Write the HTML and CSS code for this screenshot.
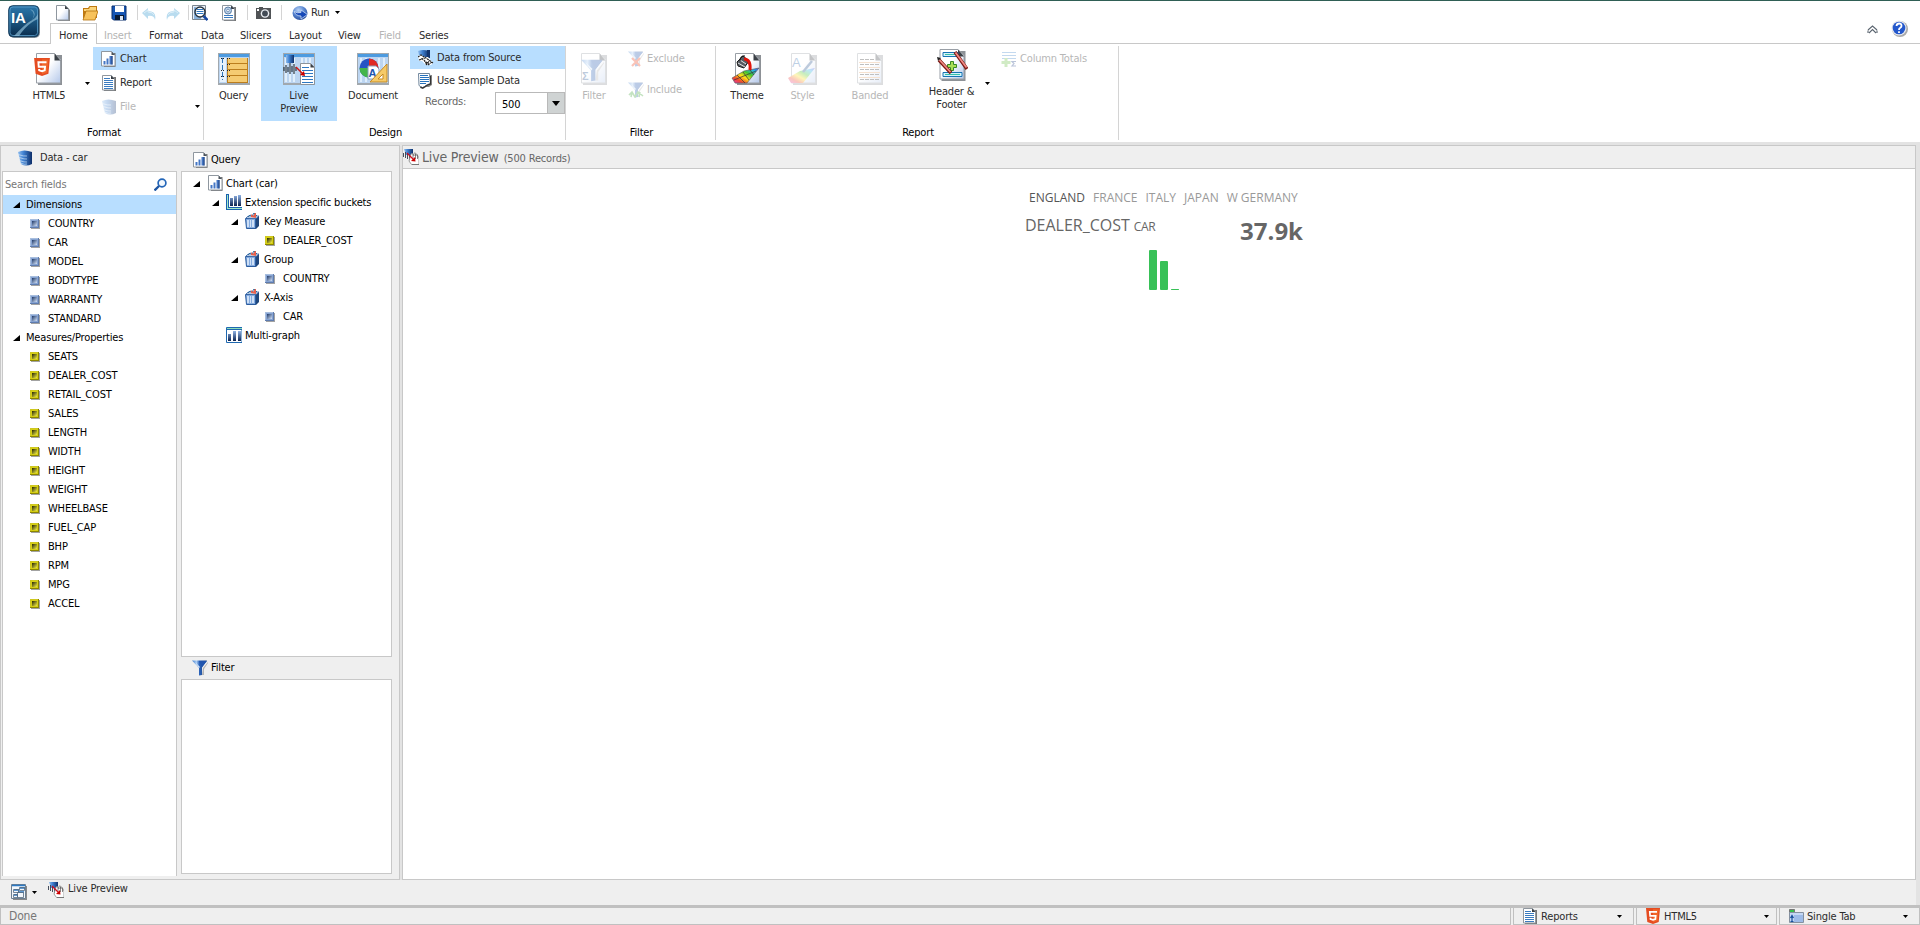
FILE: index.html
```html
<!DOCTYPE html>
<html lang="en">
<head>
<meta charset="utf-8">
<title>InfoAssist</title>
<link rel="stylesheet" href="styles.css">
</head>
<body>
<svg class="defs" width="0" height="0" aria-hidden="true">
  <defs>
    <linearGradient id="gPage" x1="0" y1="0" x2="1" y2="1"><stop offset=".45" stop-color="#fff"/><stop offset="1" stop-color="#b4c8ea"/></linearGradient>
    <linearGradient id="gLogo" x1="0" y1="0" x2="0" y2="1"><stop offset="0" stop-color="#2c78ac"/><stop offset=".5" stop-color="#1a5580"/><stop offset="1" stop-color="#0a2c4c"/></linearGradient>
    <linearGradient id="gBar" x1="0" y1="0" x2="0" y2="1"><stop offset="0" stop-color="#8fb2e4"/><stop offset="1" stop-color="#0c2350"/></linearGradient>
    <linearGradient id="gDb" x1="0" y1="0" x2="1" y2="0"><stop offset="0" stop-color="#8fbdee"/><stop offset=".4" stop-color="#3f80d0"/><stop offset="1" stop-color="#0e2f6a"/></linearGradient>
    <linearGradient id="gFunnel" x1="0" y1="0" x2="1" y2="0"><stop offset="0" stop-color="#3f7fd0"/><stop offset=".3" stop-color="#a9cbf2"/><stop offset=".5" stop-color="#2a62b8"/><stop offset="1" stop-color="#1b3f7c"/></linearGradient>
    <linearGradient id="gBlue" x1="0" y1="0" x2="1" y2="1"><stop offset="0" stop-color="#1c3766"/><stop offset="1" stop-color="#d5e3f8"/></linearGradient>
    <linearGradient id="gGold" x1="0" y1="0" x2="1" y2="1"><stop offset="0" stop-color="#222200"/><stop offset="1" stop-color="#f5f04a"/></linearGradient>
    <radialGradient id="gBall" cx=".4" cy=".3" r=".8"><stop offset="0" stop-color="#b9d3f6"/><stop offset=".5" stop-color="#5684cf"/><stop offset="1" stop-color="#1c3f8f"/></radialGradient>
    <linearGradient id="gRain" x1="0" y1="1" x2="1" y2="0"><stop offset="0" stop-color="#e33ac0"/><stop offset=".22" stop-color="#f04a2a"/><stop offset=".42" stop-color="#ffe21a"/><stop offset=".62" stop-color="#43c62c"/><stop offset=".82" stop-color="#25b4ee"/><stop offset="1" stop-color="#4a3ad8"/></linearGradient>
  </defs>

  <symbol id="page" viewBox="0 0 16 16"><path d="M3 2h9l3 3v11H3z" fill="#888"/><path d="M1.500.5h9l3 3.500v11H1.500z" fill="url(#gPage)" stroke="#8f979f"/><path d="M10 .5V4h3.500z" fill="#3c4248"/></symbol>
  <symbol id="chartpage" viewBox="0 0 16 16"><path d="M3 2h11.500v14H3z" fill="#777"/><path d="M.5.5h10l3.500 3.500v11H.5z" fill="#fff" stroke="#8f979f"/><path d="M10.500.5V4H14z" fill="#4c545c"/><path d="M2.500 10h2v3.500h-2zM5.500 7.500h2v6h-2zM8.500 5h3v8.500h-3z" fill="#4476c4"/><path d="M10.500 5h1v8.500h-1z" fill="#1c3f7c"/></symbol>
  <symbol id="textpage" viewBox="0 0 16 16"><path d="M3 2h12v14H3z" fill="#777"/><path d="M1.500.5h9l3 3.500v11h-12z" fill="#fff" stroke="#8f979f"/><path d="M10 .5V4h3.500z" fill="#333a42"/><path d="M3 3.500h6M3 5.500h9M3 7.500h9M3 9.500h9M3 11.500h9M3 13.500h9" stroke="#3a7bc0"/></symbol>
  <symbol id="db" viewBox="0 0 16 16"><path d="M1 2q6-3 14 0v12q-6 3-11 0z" fill="url(#gDb)"/><path d="M1 4.500q6 2 9 1.500M2 7.500q6 2 8 1.500M2 10.500q6 2 8 1.500M3 13q5 2 7 1" fill="none" stroke="#d9ebfa" stroke-width=".8" opacity=".8"/></symbol>
  <symbol id="funnel" viewBox="0 0 16 16"><path d="M11 8l5-6v1l-4 6v6h-2z" fill="#b5b5b5"/><path d="M0 .5h15L10 7.500V15l-3 .5V8z" fill="url(#gFunnel)"/><path d="M3 2l5 5-1 1z" fill="#d9e9fb"/><path d="M7 1h8l-5 6z" fill="#2155ae"/></symbol>
  <symbol id="measure" viewBox="0 0 10 10"><path d="M1 1h9v9H1z" fill="#a2a2a2"/><path d="M0 0h9v9H0z" fill="#8c8600"/><path d="M0 0h8v1H1v7H0z" fill="#cfc820"/><path d="M1 1h7v7H1z" fill="#d6cf14"/><path d="M2 2h5v5H2z" fill="url(#gGold)"/></symbol>
  <symbol id="dim" viewBox="0 0 10 10"><path d="M1 1h9v9H1z" fill="#a2a2a2"/><path d="M0 0h9v9H0z" fill="#5f7cae"/><path d="M0 0h8v1H1v7H0z" fill="#a8bede"/><path d="M1 1h7v7H1z" fill="#86a3d2"/><path d="M2 2h5v5H2z" fill="url(#gBlue)"/></symbol>
  <symbol id="tri" viewBox="0 0 7 6"><path d="M7 0v6H0z" fill="#000"/></symbol>
  <symbol id="down" viewBox="0 0 5 3"><path d="M0 0h5L2.500 3z" fill="#000"/></symbol>
  <symbol id="buckets" viewBox="0 0 16 16"><path d="M0 0h3v13h13v3H0z" fill="#1a62ae"/><path d="M1 1h1v13h14v1H1z" fill="#a5e8c6"/><path d="M4 4h3v8H4zM8 2h3v10H8zM12 1h3v11h-3z" fill="url(#gBar)"/></symbol>
  <symbol id="multi" viewBox="0 0 16 16"><path d="M.5.500H16v15H.5z" fill="#fff" stroke="#1f68b0"/><path d="M1 1h15v1H1z" fill="#8edfb9"/><path d="M0 2.500h16" stroke="#1f68b0"/><path d="M2 7h3v7H2zM7 4h3v10H7zM12 4h3v10h-3z" fill="url(#gBar)"/></symbol>
  <symbol id="bucket" viewBox="0 0 16 16"><path d="M2 5l2-2h10v10l-3 3H2z" fill="#1f467c"/><path d="M.5 5.500h10v10h-9z" fill="#86acdf" stroke="#2b5c9f"/><path d="M2 7h2v7H2zM5 7h1v7H5zM7 7h2v7H7z" fill="#cfe0f6"/><path d="M1 5l2-2h11l-3 2.500z" fill="#dfe9f5" stroke="#2b5c9f" stroke-width=".7"/><path d="M3 4l2-2 2 1 2-3 3 3" fill="none" stroke="#2b6a9f"/><path d="M6 4V1l2 2 2-3h1v5z" fill="#e8604c"/></symbol>
  <symbol id="html5" viewBox="0 0 16 16"><path d="M1 0h14l-1.300 14L8 16l-5.700-2z" fill="#e54c21"/><path d="M8 1.300h5.600l-1 11.500L8 14.500z" fill="#f1662a"/><path d="M12 3.800H4.800l.3 4h5.600l-.3 3.200-2.400.8-2.500-.8-.1-1.200" fill="none" stroke="#fff" stroke-width="1.700"/></symbol>
  <symbol id="live" viewBox="0 0 16 16"><path d="M1 0h9v6H3z" fill="url(#gDb)"/><path d="M.5 4v4M2.500 3v6M4.500 5v5M6.500 7v5" stroke="#333c4c" stroke-width=".9"/><path d="M8 5q1-1 2 0l1 2V4h1.500l.5 3V5l1.500.5.5 3 1-1v8H8.500L6 12z" fill="#fff" stroke="#888" stroke-width=".8"/><path d="M10 5v4M12.500 5v5M14.500 6v4" stroke="#555" stroke-width=".7"/><path d="M9 15.500h7" stroke="#777"/><path d="M4 4l7 7" stroke="#d01020" stroke-width="1.200"/><path d="M12.500 12.500l-4.500-.5 4-4z" fill="#c00"/></symbol>
  <symbol id="source" viewBox="0 0 16 16"><path d="M0 1q5-2 11 0v8L4 7 1 5z" fill="url(#gDb)"/><path d="M9 0h3v8H9z" fill="#12356f"/><path d="M0 6l3-1 4 2 3 0 5 6-2 2H8l-4-4H1z" fill="#fff"/><path d="M0 7l3-2 5 3 7 5M1 10l3-1 7 5M3 9l4-1M6 10l3 5M8 15l4-5M10 15l4-3" fill="none" stroke="#222" stroke-width="1.100" stroke-dasharray="2 .7"/></symbol>
  <symbol id="sample" viewBox="0 0 16 16"><path d="M2 2h12v10l-3 2-3 0-3 2-3-1z" fill="#888"/><path d="M.5.500h11l1 10-3 1-3 2-2 1-2-1-1.500-1z" fill="#fff" stroke="#71879d"/><path d="M2 2.500h8M2 4.500h9M2 6.500h9M2 8.500h9M2 10.500h6" stroke="#2772bd"/><path d="M12.500 3v8l-3 1-3 2-2 1-2-1" fill="none" stroke="#333" stroke-width="1.200"/></symbol>
  <symbol id="window" viewBox="0 0 32 32"><path d="M0 0h32v32H0z" fill="#a1a8ae"/><path d="M1 1h30v29H1z" fill="#bcd5f1"/><path d="M1 1h30v3H1z" fill="#4d9be0"/></symbol>
  <symbol id="bigpage" viewBox="0 0 26 32"><path d="M2 2h24v30H2z" fill="#8d9196"/><path d="M.5.500h18l6 6V30H.5z" fill="url(#gPage)" stroke="#999fa6"/><path d="M18.500.500v7h6z" fill="#3b4046"/></symbol>
</svg>

<div class="app">
  <header class="top">
    <svg class="logo" viewBox="0 0 32 33"><rect x="1" y="1" width="31" height="32" rx="5" fill="#8a949c"/><rect x=".7" y=".7" width="30" height="31" rx="4" fill="url(#gLogo)" stroke="#153f60"/><rect x="2" y="2" width="27.500" height="28.500" rx="3" fill="none" stroke="#5aa0cc" stroke-width=".8"/><path d="M22 4q8 3 2 11Q17 19 6 31h5q6-9 12-13 4-3 7-4V9q-2 4-7 7 6-7-1-12z" fill="#8dbcd6" opacity=".7"/><text x="3" y="17.500" class="logo-text">IA</text></svg>
    <div class="top-rows">
      <div class="quick">
        <svg class="q q-new"><use href="#page"/></svg>
        <svg class="q q-open" viewBox="0 0 16 16"><path d="M1 3h5l1.500-2H15v12H1z" fill="#c07a10"/><path d="M2 4h5l1-2h6v4H2z" fill="#fbd57a"/><path d="M4 6h12l-3 9H1z" fill="#f7c25c" stroke="#b5720e" stroke-width=".8"/></svg>
        <svg class="q q-save" viewBox="0 0 16 16"><path d="M1 1h14v14H2.500L1 13.500z" fill="#1556b4" stroke="#0b2e6c"/><path d="M4 1h9v6H4z" fill="#fff"/><path d="M4 10h9v5H4z" fill="#0a1b33"/><path d="M9 11h3v4H9z" fill="#dce6f2"/></svg>
        <i class="sep"></i>
        <svg class="q q-undo" viewBox="0 0 14 16"><path d="M0 8l6-5v3q9 0 7 9-1-5-7-4v3z" fill="#b9dcef"/><path d="M2 8l4-3v2q5 0 6 3" fill="none" stroke="#dceef8"/></svg>
        <svg class="q q-redo" viewBox="0 0 14 16"><path d="M14 8L8 3v3q-9 0-7 9 1-5 7-4v3z" fill="#b9dcef"/><path d="M12 8L8 5v2q-5 0-6 3" fill="none" stroke="#dceef8"/></svg>
        <i class="sep"></i>
        <svg class="q q-find" viewBox="0 0 16 16"><path d="M.5.500h13v14H.5z" fill="#e9eff6" stroke="#7a858f"/><path d="M2 3h2M2 5h2M2 7h2M2 9h2M2 11h3M2 13h7" stroke="#2d76c0"/><circle cx="8" cy="7" r="5" fill="#fff" stroke="#26313c" stroke-width="1.400"/><path d="M5 4.500h6M4.500 6.500h7M4.500 8.500h7" stroke="#2d76c0"/><path d="M11.500 11l4 4" stroke="#1546a0" stroke-width="2.500"/></svg>
        <svg class="q q-props" viewBox="0 0 16 16"><path d="M3 2h12v14H3z" fill="#777"/><path d="M1.500.5h9l3 3.500v11h-12z" fill="#fff" stroke="#8f979f"/><path d="M10 .5V4h3.500z" fill="#333a42"/><path d="M3 10.500h9M3 12.500h9" stroke="#3a7bc0"/><circle cx="7" cy="5.500" r="3.500" fill="#b8cfe8" stroke="#5c7ea5"/><circle cx="7" cy="5.500" r="1.300" fill="#fff" stroke="#5c7ea5" stroke-width=".7"/></svg>
        <i class="sep"></i>
        <svg class="q q-cam" viewBox="0 0 17 16"><path d="M1 3h3V2h4v1h8v11H1z" fill="#505356"/><circle cx="10" cy="8.500" r="4.300" fill="#e9edf2"/><circle cx="10" cy="8.500" r="2.900" fill="#424b55"/><path d="M2 4h2v2H2z" fill="#fff"/></svg>
        <i class="sep"></i>
        <svg class="q q-run" viewBox="0 0 16 16"><ellipse cx="8" cy="8" rx="7.500" ry="7" fill="url(#gBall)"/><path d="M2 6.500q3 2 7 1V5l6.500 4.500L9 14v-3Q4 11 2 6.500z" fill="#1749b8" stroke="#dce9fa" stroke-width=".7"/></svg>
        <span class="run">Run</span>
        <svg class="down"><use href="#down"/></svg>
      </div>
      <nav class="tabs">
        <span class="tab active">Home</span><span class="tab t-insert off">Insert</span><span class="tab t-format">Format</span><span class="tab t-data">Data</span><span class="tab t-slicers">Slicers</span><span class="tab t-layout">Layout</span><span class="tab t-view">View</span><span class="tab t-field off">Field</span><span class="tab t-series">Series</span>
        <span class="corner">
          <svg class="collapse" viewBox="0 0 11 9"><path d="M1 5l4.500-4L10 5M1 8V5.500M10 8V5.500M2 8l3.500-3.500L9 8" fill="none" stroke="#5c6671" stroke-width="1.100"/></svg>
          <svg class="help" viewBox="0 0 17 17"><circle cx="9" cy="9" r="8" fill="#aaa"/><circle cx="8" cy="8" r="7.500" fill="#e6e8ee"/><circle cx="8" cy="8" r="6.300" fill="#2458cc"/><path d="M5.500 6q.3-2.500 2.700-2.500T10.500 6Q10.500 7 9 8 8 8.500 8 10M8 11.300v1.600" fill="none" stroke="#fff" stroke-width="1.800"/></svg>
        </span>
      </nav>
    </div>
  </header>

  <section class="ribbon">
    <div class="group g-format">
      <div class="body">
        <div class="big b-html5"><svg class="ic32" viewBox="0 0 32 32"><svg x="3" width="26" height="32"><use href="#bigpage"/></svg><svg x="0" y="4" width="18" height="20"><use href="#html5"/></svg></svg><span>HTML5</span></div>
        <svg class="down split"><use href="#down"/></svg>
        <div class="list l-format">
          <div class="item sel"><svg class="ic16"><use href="#chartpage"/></svg><span>Chart</span></div>
          <div class="item"><svg class="ic16"><use href="#textpage"/></svg><span>Report</span></div>
          <div class="item off"><svg class="ic16 faded"><use href="#db"/></svg><span>File</span><svg class="down end"><use href="#down"/></svg></div>
        </div>
      </div>
      <div class="label">Format</div>
    </div>
    <div class="group g-design">
      <div class="body">
        <div class="big b-query"><svg class="ic32" viewBox="0 0 32 32"><use href="#window"/><path d="M2 5h6v24H2z" fill="#e6f1fb"/><path d="M4.500 5v22" stroke="#2e74b8" stroke-dasharray="5 2"/><path d="M9 5h21v25H9z" fill="#bb7d1d"/><path d="M10 5h19v5H10zM10 11h19v5H10zM10 17h19v5H10zM10 23h19v6H10z" fill="#f5cb72"/><path d="M9 5.500h4M9 11.500h4M9 17.500h4M9 23.500h4M3 5.500h3M3 17.500h3M3 23.500h3" stroke="#222" stroke-dasharray="1 1"/></svg><span>Query</span></div>
        <div class="big b-live sel"><svg class="ic32" viewBox="0 0 32 32"><use href="#window"/><path d="M3 5v24M7 5v24M11 5v24M19 5v24M23 5v24M27 5v24" stroke="#e1effb" stroke-width="2"/><path d="M3 2h8v8H3z" fill="url(#gDb)"/><path d="M1 14v4M3 12v8M5 14v5M7 10v11M9 13v6M11 11v10M13 14v4" stroke="#1d2733" stroke-width="1.100"/><path d="M17.500 10.500h10l4 4v17h-14z" fill="#fff" stroke="#8c939a"/><path d="M19 14.500h7M19 17.500h11M19 20.500h11M19 23.500h11M19 26.500h11M19 29.500h11" stroke="#2d78c2"/><path d="M27.500 10.500v4h4z" fill="#3b4046"/><path d="M13 14l7 7" stroke="#d01818" stroke-width="1.500"/><path d="M22 23l-5-1 4-4z" fill="#c80000"/></svg><span>Live<br>Preview</span></div>
        <div class="big b-doc"><svg class="ic32" viewBox="0 0 32 32"><use href="#window"/><path d="M4 5v24M9 5v24M22 5v24M27 5v24" stroke="#deedfb" stroke-width="2"/><circle cx="12" cy="15" r="9.500" fill="#2554c4"/><path d="M12 15V5.500A9.500 9.500 0 0 1 21.500 15z" fill="#e02a24"/><path d="M12 15L2.500 15A9.500 9.500 0 0 0 12 24.500z" fill="#45b54a"/><path d="M11 13h8l3 3v10H11z" fill="#fff" stroke="#8ba0b8"/><text x="11.500" y="24" class="doc-a">A</text><path d="M30 11v18H13z" fill="#f6ca67" stroke="#c58a24"/><path d="M26 21v5h-5z" fill="#fff" stroke="#c58a24"/></svg><span>Document</span></div>
        <div class="list l-design">
          <div class="item sel"><svg class="ic16"><use href="#source"/></svg><span>Data from Source</span></div>
          <div class="item"><svg class="ic16"><use href="#sample"/></svg><span>Use Sample Data</span></div>
          <div class="records"><span>Records:</span><div class="select"><span>500</span><i><svg class="down wide"><use href="#down"/></svg></i></div></div>
        </div>
      </div>
      <div class="label">Design</div>
    </div>
    <div class="group g-filter">
      <div class="body">
        <div class="big b-filter off"><svg class="ic32 faded" viewBox="0 0 32 32"><svg x="3" width="26" height="32"><use href="#bigpage"/></svg><svg x="3" y="5" width="23" height="25"><use href="#funnel"/></svg><text x="4" y="27" class="sigma">Σ</text></svg><span>Filter</span></div>
        <div class="list l-filter">
          <div class="item off"><svg class="ic16 faded" viewBox="0 0 16 16"><use href="#funnel"/><path d="M4 7l8 8M12 7l-8 8" stroke="#f03c14" stroke-width="2.200"/></svg><span>Exclude</span></div>
          <div class="item off"><svg class="ic16 faded" viewBox="0 0 16 16"><use href="#funnel"/><path d="M1 13l3-3 3 5 3-5 5 4M4 10l-1 5M12 10l-1 5" fill="none" stroke="#3ea435" stroke-width="1.600"/></svg><span>Include</span></div>
        </div>
      </div>
      <div class="label">Filter</div>
    </div>
    <div class="group g-report">
      <div class="body">
        <div class="big b-theme"><svg class="ic32" viewBox="0 0 32 32"><svg x="4" width="26" height="32"><use href="#bigpage"/></svg><path d="M1 25l12-7 15-3-12 15H4z" fill="url(#gRain)" stroke="#555" stroke-width=".6"/><path d="M6 22l8 8M12 19l6 8M19 17l4 5M3 27l22-9" stroke="#333" stroke-width=".7"/><path d="M6 9l6-6 6 5-5 7-6-2z" fill="#565b62" stroke="#1c1c1c"/><path d="M7 10l7 4M9 7l6 4" stroke="#e6e6e6"/><path d="M9 8q0-6 5-5" fill="none" stroke="#111"/><path d="M13 6q7 0 6 11" fill="none" stroke="#e0140c" stroke-width="3"/></svg><span>Theme</span></div>
        <div class="big b-style off"><svg class="ic32 faded" viewBox="0 0 32 32"><svg x="4" width="26" height="32"><use href="#bigpage"/></svg><text x="5" y="14" class="style-a">A</text><path d="M1 25l12-7 15-3-12 15H4z" fill="url(#gRain)"/><path d="M16 19L25 8" stroke="#27538f" stroke-width="2.500"/></svg><span>Style</span></div>
        <div class="big b-banded off"><svg class="ic32 faded" viewBox="0 0 32 32"><svg x="3" width="26" height="32"><use href="#bigpage"/></svg><path d="M6 6.500h14M6 11.500h20M6 16.500h20M6 21.500h20M6 26.500h20" stroke="#333" stroke-width="1.200" stroke-dasharray="4 1"/><path d="M5 9.500h21M5 14.500h21M5 19.500h21M5 24.500h21" stroke="#e3a066"/></svg><span>Banded</span></div>
        <div class="big b-header"><svg class="ic32" viewBox="0 0 32 32"><svg x="3" width="27" height="32"><use href="#bigpage"/></svg><path d="M7 3.500h15v4H7zM7 23.500h19v4H7z" fill="#d3f4f8" stroke="#1673b4"/><path d="M9 5.500h11M9 25.500h15" stroke="#37bea8"/><path d="M14.500 12.500h3v3h3v3h-3v3h-3v-3h-3v-3h3z" fill="#a8df55" stroke="#368727"/><path d="M3 11l12 13M19 3l12 17" stroke="#7b1712" stroke-width="3.500"/><path d="M3.500 11l11 12M19.500 3.500l11 15" stroke="#f08a84" stroke-width="1.800"/><path d="M1 8l4 1-3 3z" fill="#222"/></svg><span>Header &amp;<br>Footer</span></div>
        <svg class="down hsplit"><use href="#down"/></svg>
        <div class="list l-report"><div class="item off"><svg class="ic16 faded" viewBox="0 0 16 16"><path d="M1 1.500h14M1 4.500h14M1 7.500h14" stroke="#3c85cb"/><path d="M3.500 7h3v3h3v3h-3v3h-3v-3h-3v-3h3z" fill="#6bc043"/><path d="M15 10.500h-4l2 2-2 2.500h4" fill="none" stroke="#1d3f85" stroke-width="1.200"/></svg><span>Column Totals</span></div></div>
      </div>
      <div class="label">Report</div>
    </div>
  </section>

  <main class="work">
    <aside class="left">
      <div class="data">
        <div class="data-head"><svg class="ic16"><use href="#db"/></svg><span>Data - car</span></div>
        <div class="data-box">
          <div class="search"><span>Search fields</span><svg class="mag" viewBox="0 0 13 13"><circle cx="8" cy="5" r="3.900" fill="#f2f8fe" stroke="#2466b8" stroke-width="1.700"/><path d="M5 8l-4.500 4.500" stroke="#1f56a2" stroke-width="2.300"/></svg></div>
          <div class="row folder sel"><svg class="tri"><use href="#tri"/></svg><span>Dimensions</span></div>
          <div class="row field"><svg class="sq"><use href="#dim"/></svg><span>COUNTRY</span></div>
          <div class="row field"><svg class="sq"><use href="#dim"/></svg><span>CAR</span></div>
          <div class="row field"><svg class="sq"><use href="#dim"/></svg><span>MODEL</span></div>
          <div class="row field"><svg class="sq"><use href="#dim"/></svg><span>BODYTYPE</span></div>
          <div class="row field"><svg class="sq"><use href="#dim"/></svg><span>WARRANTY</span></div>
          <div class="row field"><svg class="sq"><use href="#dim"/></svg><span>STANDARD</span></div>
          <div class="row folder"><svg class="tri"><use href="#tri"/></svg><span>Measures/Properties</span></div>
          <div class="row field"><svg class="sq"><use href="#measure"/></svg><span>SEATS</span></div>
          <div class="row field"><svg class="sq"><use href="#measure"/></svg><span>DEALER_COST</span></div>
          <div class="row field"><svg class="sq"><use href="#measure"/></svg><span>RETAIL_COST</span></div>
          <div class="row field"><svg class="sq"><use href="#measure"/></svg><span>SALES</span></div>
          <div class="row field"><svg class="sq"><use href="#measure"/></svg><span>LENGTH</span></div>
          <div class="row field"><svg class="sq"><use href="#measure"/></svg><span>WIDTH</span></div>
          <div class="row field"><svg class="sq"><use href="#measure"/></svg><span>HEIGHT</span></div>
          <div class="row field"><svg class="sq"><use href="#measure"/></svg><span>WEIGHT</span></div>
          <div class="row field"><svg class="sq"><use href="#measure"/></svg><span>WHEELBASE</span></div>
          <div class="row field"><svg class="sq"><use href="#measure"/></svg><span>FUEL_CAP</span></div>
          <div class="row field"><svg class="sq"><use href="#measure"/></svg><span>BHP</span></div>
          <div class="row field"><svg class="sq"><use href="#measure"/></svg><span>RPM</span></div>
          <div class="row field"><svg class="sq"><use href="#measure"/></svg><span>MPG</span></div>
          <div class="row field"><svg class="sq"><use href="#measure"/></svg><span>ACCEL</span></div>
        </div>
      </div>
      <div class="query">
        <div class="query-head"><svg class="ic16"><use href="#chartpage"/></svg><span>Query</span></div>
        <div class="query-box">
          <div class="row n1"><svg class="tri"><use href="#tri"/></svg><svg class="ic16"><use href="#chartpage"/></svg><span>Chart (car)</span></div>
          <div class="row n2"><svg class="tri"><use href="#tri"/></svg><svg class="ic16"><use href="#buckets"/></svg><span>Extension specific buckets</span></div>
          <div class="row n3"><svg class="tri"><use href="#tri"/></svg><svg class="ic16"><use href="#bucket"/></svg><span>Key Measure</span></div>
          <div class="row leaf"><svg class="sq"><use href="#measure"/></svg><span>DEALER_COST</span></div>
          <div class="row n3"><svg class="tri"><use href="#tri"/></svg><svg class="ic16"><use href="#bucket"/></svg><span>Group</span></div>
          <div class="row leaf"><svg class="sq"><use href="#dim"/></svg><span>COUNTRY</span></div>
          <div class="row n3"><svg class="tri"><use href="#tri"/></svg><svg class="ic16"><use href="#bucket"/></svg><span>X-Axis</span></div>
          <div class="row leaf"><svg class="sq"><use href="#dim"/></svg><span>CAR</span></div>
          <div class="row n2 bare"><svg class="ic16"><use href="#multi"/></svg><span>Multi-graph</span></div>
        </div>
        <div class="filter-head"><svg class="ic16"><use href="#funnel"/></svg><span>Filter</span></div>
        <div class="filter-box"></div>
      </div>
    </aside>
    <section class="preview">
      <div class="preview-head"><svg class="ic16"><use href="#live"/></svg><span class="title">Live Preview</span><span class="count">(500 Records)</span></div>
      <div class="canvas">
        <div class="kpi">
          <div class="countries"><span class="on">ENGLAND</span><span>FRANCE</span><span>ITALY</span><span>JAPAN</span><span>W GERMANY</span></div>
          <div class="figures"><div class="measure"><span class="name">DEALER_COST</span><span class="axis">CAR</span></div><span class="value">37.9k</span></div>
          <div class="bars"><i class="bar b1"></i><i class="bar b2"></i><i class="bar b3"></i></div>
        </div>
      </div>
    </section>
  </main>

  <div class="taskbar">
    <svg class="cascade" viewBox="0 0 16 16"><path d="M2 2h14v14H2z" fill="#888"/><path d="M.5.500h14v14H.5z" fill="#f3f7fb" stroke="#6d7f90"/><path d="M1 1.500h13M3 6h5M9 4h5M3 11h4M7 8h6" stroke="#2c7ac4" stroke-width="1.300"/><path d="M2.500 5.500h5v3h-5zM8.500 3.500h5v3h-5zM6.500 8.500h6v5h-6zM2.500 10.500h4v3h-4z" fill="none" stroke="#53687d" stroke-width=".8"/></svg>
    <svg class="down"><use href="#down"/></svg>
    <svg class="ic16 tlive"><use href="#live"/></svg>
    <span class="ttext">Live Preview</span>
  </div>
  <footer class="status">
    <div class="cell done">Done</div>
    <div class="cell c-rep"><svg class="ic16"><use href="#textpage"/></svg><span>Reports</span><svg class="down"><use href="#down"/></svg></div>
    <div class="cell c-html"><svg class="ic16"><use href="#html5"/></svg><span>HTML5</span><svg class="down"><use href="#down"/></svg></div>
    <div class="cell c-tab"><svg class="ic16" viewBox="0 0 16 16"><path d="M1.500 1.500h5v3h-5z" fill="#36c04c" stroke="#777"/><path d="M1.500 4.500h14v10h-14z" fill="#c5d8f4" stroke="#8590a0"/><path d="M6 7h9v7H6z" fill="#9dbbe8"/><path d="M4 13V8M2.500 10L4 7.500 5.500 10M2.500 13.500h3" fill="none" stroke="#184f9c" stroke-width="1.200"/></svg><span>Single Tab</span><svg class="down"><use href="#down"/></svg></div>
  </footer>
</div>
</body>
</html>
```
FILE: styles.css
```css
* { box-sizing: border-box; }
html, body { margin: 0; height: 100%; overflow: hidden; }
body { font: 11px/13px "Tahoma", "DejaVu Sans Condensed", "Noto Sans", sans-serif; letter-spacing: -0.17px; color: #000; background: #fff; }
svg, i { display: block; flex: none; }
span { white-space: nowrap; }
.defs { position: absolute; }
.app { width: 1920px; height: 925px; display: flex; flex-direction: column; border-top: 1px solid #2f5f55; }
.ic16 { width: 16px; height: 16px; }
.ic32 { width: 32px; height: 32px; }
.down { width: 5px; height: 3px; }
.faded { opacity: .3; }
.sel { background: #b8deff; }

/* title area: logo, quick access bar and tabs */
.top { height: 43px; display: flex; flex: none; background: linear-gradient(#c8c8c8, #c8c8c8) bottom / 100% 1px no-repeat; color: #2b2b2b; }
.logo { width: 32px; height: 33px; margin: 4px 10px 0 8px; }
.logo-text { font: bold 15px "Liberation Sans", sans-serif; fill: #fff; }
.top-rows { flex: 1; }
.quick { display: flex; height: 22px; padding: 1px 0 0 5px; align-items: center; }
.q { width: 16px; height: 16px; }
.q-open { margin-left: 11px; }
.q-save { margin-left: 13px; }
.q-undo { width: 14px; margin-left: 4px; }
.q-redo { width: 14px; margin-left: 10px; }
.q-find { margin-left: 3px; }
.q-props { margin-left: 13px; }
.q-cam { width: 17px; margin-left: 7px; }
.q-run { margin-left: 10px; }
.sep { width: 1px; height: 15px; background: #d4d4d4; margin-left: 10px; }
.q-redo + .sep { margin-left: 8px; }
.q-cam + .sep { margin-left: 9px; }
.run { margin: 0 6px 0 3px; }
.tabs { display: flex; height: 21px; }
.tab { line-height: 25px; flex: none; height: 20px; }
.tab.active { width: 47px; height: 21px; line-height: 23px; border: 1px solid #c8c8c8; border-bottom: 0; background: #fff; padding-left: 8px; }
.tab.off { color: #b4b4b4; }
.t-insert { width: 45px; margin-left: 7px; }
.t-format { width: 52px; }
.t-data { width: 39px; }
.t-slicers { width: 49px; }
.t-layout { width: 49px; }
.t-view { width: 41px; }
.t-field { width: 40px; }
.corner { display: flex; margin-left: auto; align-items: flex-start; }
.collapse { width: 11px; height: 9px; margin: 2px 13px 0 0; }
.help { width: 17px; height: 17px; margin: -3px 12px 0 0; }

/* ribbon */
.ribbon { height: 98px; flex: none; display: flex; padding-top: 2px; color: #2b2b2b; }
.group { height: 94px; border-right: 1px solid #d4d4d4; display: flex; flex-direction: column; }
.g-format { width: 204px; }
.g-design { width: 362px; }
.g-filter { width: 150px; }
.g-report { width: 403px; }
.body { height: 80px; display: flex; }
.label { text-align: center; color: #000; padding-left: 2px; }
.g-format .label { padding-left: 5px; }
.big { height: 75px; padding-top: 7px; display: flex; flex-direction: column; align-items: center; text-align: center; flex: none; }
.big span { margin-top: 4px; }
.off { color: #b7b7b7; }
.b-html5 { width: 72px; margin-left: 13px; }
.split { margin-top: 36px; }
.b-query { width: 57px; padding-left: 2px; }
.b-live { width: 76px; }
.b-doc { width: 72px; }
.b-filter { width: 56px; }
.b-theme { width: 62px; }
.b-style { width: 49px; }
.b-banded { width: 86px; }
.b-header { width: 77px; padding-top: 3px; }
.hsplit { margin: 36px 0 0 -5px; }
.doc-a { font: bold 11px "Liberation Sans", sans-serif; fill: #2054b0; }
.sigma { font: bold 11px "Liberation Sans", sans-serif; fill: #27538f; }
.style-a { font: 13px "Liberation Sans", sans-serif; fill: #2c66ab; }
.item { display: flex; height: 23px; align-items: center; gap: 3px; }
.l-format { width: 110px; margin-left: 3px; padding-top: 1px; }
.l-format .item { padding-left: 8px; margin-bottom: 1px; }
.end { margin: 0 3px 0 auto; }
.l-design { width: 155px; margin-left: auto; }
.l-design .item { padding-left: 8px; }
.records { display: flex; padding-left: 15px; color: #666; }
.records > span { line-height: 19px; }
.select { display: flex; width: 70px; height: 22px; margin-left: auto; border: 1px solid #b9b9b9; background: #fff; color: #000; }
.select span { flex: 1; padding-left: 6px; line-height: 23px; }
.select i { width: 17px; background: #cfd3d3; border-left: 1px solid #b9b9b9; }
.wide { width: 8px; height: 5px; margin: 8px 0 0 4px; }
.l-filter { padding-left: 6px; }
.l-filter .item { height: 25px; margin-bottom: 6px; }
.l-report { padding-left: 11px; }
.l-report .item { height: 25px; }

/* work area */
.work { flex: none; height: 738px; display: flex; padding-top: 3px; background: #e3e3e3; }
.left { width: 400px; height: 735px; border: 1px solid #c8c8c8; background: #efefef; display: flex; }
.data { width: 180px; padding-left: 1px; }
.data-head { height: 25px; display: flex; align-items: center; padding: 0 0 2px 15px; gap: 7px; color: #2b2b2b; }
.data-box { width: 175px; height: 705px; background: #fff; border: 1px solid #c8c8c8; border-bottom: 0; }
.search { height: 23px; display: flex; justify-content: space-between; align-items: center; padding: 2px 9px 0 2px; color: #777; }
.mag { width: 13px; height: 13px; }
.row { height: 19px; display: flex; align-items: center; }
.tri { width: 7px; height: 6px; }
.sq { width: 10px; height: 10px; }
.folder { padding-left: 10px; gap: 6px; }
.field { padding-left: 27px; gap: 8px; }
.query { width: 211px; }
.query-head { height: 25px; padding: 2px 0 0 12px; display: flex; align-items: center; gap: 2px; }
.query-box { height: 486px; background: #fff; border: 1px solid #c8c8c8; padding-top: 2px; }
.n1 { padding-left: 11px; }
.n2 { padding-left: 30px; }
.n3 { padding-left: 49px; }
.query-box .tri { margin-right: 7px; }
.query-box .ic16 { margin: -2px 3px 0 0; }
.query-box .n1 .tri { margin-right: 8px; }
.query-box .n1 .ic16 { margin-right: 2px; }
.bare { padding-left: 44px; }
.leaf { padding-left: 83px; gap: 8px; }
.filter-head { height: 22px; padding: 0 0 1px 11px; display: flex; align-items: center; gap: 3px; }
.filter-box { height: 195px; background: #fff; border: 1px solid #c8c8c8; }
.preview { width: 1514px; height: 735px; margin-left: 2px; border: 1px solid #c8c8c8; background: #fff; }
.preview-head { height: 23px; border-bottom: 1px solid #c8c8c8; background: #efefef; display: flex; align-items: center; color: #666; }
.title { font-size: 14px; margin: 0 5px 0 3px; }
.count { padding-top: 2px; }
.kpi { width: 310px; margin: 20px 0 0 614px; font-family: "Open Sans", sans-serif; color: #666; letter-spacing: 0; padding-left: 8px; }
.countries { display: flex; height: 18px; font-size: 12px; line-height: 17px; padding-left: 4px; gap: 8px; color: #999; }
.countries .on { color: #555; }
.figures { display: flex; justify-content: space-between; height: 43px; padding: 4px 24px 0 0; }
.measure { display: flex; align-items: baseline; height: 28px; }
.name { font-size: 16px; line-height: 28px; }
.axis { font-size: 12px; margin-left: 4px; letter-spacing: -.4px; }
.value { font-size: 24px; line-height: 40px; font-weight: bold; }
.bars { display: flex; gap: 3px; align-items: flex-end; height: 40px; padding-left: 124px; }
.bar { width: 8px; background: #38c157; border-radius: 1px; }
.b1 { height: 40px; }
.b2 { height: 29px; }
.b3 { height: 1px; }

/* bottom bars */
.taskbar { height: 25px; flex: none; display: flex; align-items: flex-start; background: #efefef; border-right: 4px solid #e3e3e3; color: #2b2b2b; }
.cascade { width: 16px; height: 16px; margin: 4px 5px 0 11px; }
.taskbar .down { margin-top: 11px; }
.tlive { margin: 2px 4px 0 11px; }
.ttext { margin-top: 2px; }
.status { height: 20px; flex: none; display: flex; border-top: 3px solid #c0c0c0; background: #efefef; gap: 2px; color: #2b2b2b; }
.cell { display: flex; align-items: center; border: 1px solid #c0c0c0; border-top: 0; gap: 3px; padding: 0 11px 0 8px; }
.cell .down { margin-left: auto; }
.done { width: 1511px; font-size: 12px; color: #777; }
.c-rep { width: 121px; }
.c-html { width: 141px; padding-right: 7px; }
.c-tab { flex: 1; }
```
